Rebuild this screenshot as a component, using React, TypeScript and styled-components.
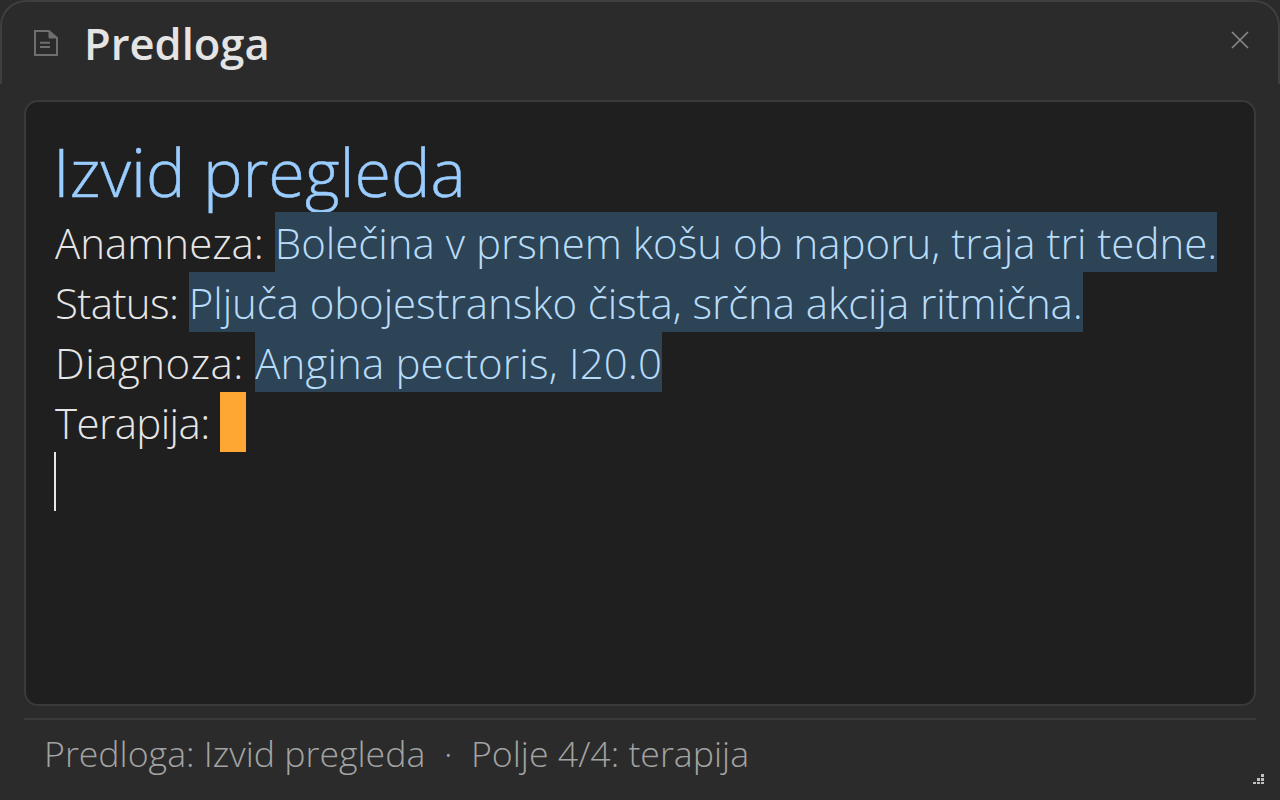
import React from "react";
import styled, { createGlobalStyle } from "styled-components";

const Global = createGlobalStyle`
  html, body { margin: 0; padding: 0; background: #2b2b2b; }
  * { box-sizing: border-box; }
`;

const Page = styled.div`
  width: 1280px;
  height: 800px;
  display: flex;
  flex-direction: column;
  background: #2b2b2b;
  overflow: hidden;
  position: relative;
  font-family: "Open Sans", "Noto Sans", sans-serif;
`;

const TitleBar = styled.header`
  height: 84px;
  flex: none;
  display: flex;
  align-items: flex-start;
  padding: 24px 28px 0 32px;
  border: 2px solid #3f3f3f;
  border-bottom: none;
  border-radius: 26px 26px 0 0;
`;

const DocIcon = styled.svg`
  width: 24px;
  height: 26px;
  margin-top: 4px;
  flex: none;
`;

const Title = styled.h1`
  margin: -7px 0 0 26px;
  flex: 1;
  font-size: 43.5px;
  line-height: 50px;
  font-weight: 600;
  color: #e4e4e4;
`;

const CloseIcon = styled.svg`
  width: 20px;
  height: 20px;
  margin-top: 4px;
  flex: none;
`;

const Editor = styled.main`
  flex: none;
  height: 606px;
  margin: 16px 24px 0;
  padding: 36px 29px 0;
  background: #1f1f1f;
  border: 2px solid #3a3a3a;
  border-radius: 14px;
`;

const Heading = styled.div`
  height: 74px;
  margin-left: -2px;
  font-size: 66.5px;
  line-height: 66px;
  font-weight: 300;
  color: #99ccff;
  -webkit-text-stroke: 0.5px #99ccff;
`;

const Line = styled.div`
  height: 60px;
  font-size: 42px;
  line-height: 62px;
  font-weight: 300;
  color: #e6e6e6;
  white-space: pre;
`;

const Label = styled.span<{ $tracking?: number }>`
  letter-spacing: ${(p) => p.$tracking ?? 0}px;
`;

const Filled = styled.span<{ $tracking?: number }>`
  display: inline-block;
  height: 60px;
  background: #2d4356;
  color: #b8dcf8;
  letter-spacing: ${(p) => p.$tracking ?? 0}px;
`;

const ActiveField = styled.span`
  display: inline-block;
  width: 26px;
  height: 60px;
  background: #ffa733;
  vertical-align: top;
`;

const Caret = styled.div`
  width: 2px;
  height: 59px;
  margin-left: -1px;
  background: #e6e6e6;
`;

const Divider = styled.hr`
  flex: none;
  height: 2px;
  margin: 12px 24px 0;
  border: none;
  background: #3a3a3a;
`;

const Footer = styled.footer`
  flex: 1;
  display: flex;
  align-items: center;
  padding: 0 0 14px 44px;
  font-size: 35.7px;
  font-weight: 300;
  color: #a3a3a3;
  white-space: pre;
`;

const Grip = styled.svg`
  position: absolute;
  right: 16px;
  bottom: 16px;
  width: 11px;
  height: 10px;
`;

export default function App() {
  return (
    <Page>
      <Global />
      <TitleBar>
        <DocIcon viewBox="0 0 24 26" fill="none" stroke="#6f6f6f" strokeWidth="2">
          <path d="M1 1h14l8 7v17H1z" />
          <path d="M15 1v7h8" fill="#6f6f6f" strokeWidth="1" />
          <path d="M6 12.7h10M6 17h10" />
        </DocIcon>
        <Title>Predloga</Title>
        <CloseIcon viewBox="0 0 20 20" fill="none" stroke="#8a8a8a" strokeWidth="1.6">
          <path d="M2 2l16 16M18 2L2 18" />
        </CloseIcon>
      </TitleBar>
      <Editor>
        <Heading>Izvid pregleda</Heading>
        <Line><Label>Anamneza: </Label><Filled>Bolečina v prsnem košu ob naporu, traja tri tedne.</Filled></Line>
        <Line><Label $tracking={-0.6}>Status: </Label><Filled $tracking={-0.08}>Pljuča obojestransko čista, srčna akcija ritmična.</Filled></Line>
        <Line><Label $tracking={0.5}>Diagnoza: </Label><Filled $tracking={0.14}>Angina pectoris, I20.0</Filled></Line>
        <Line><Label $tracking={-0.6}>Terapija: </Label><ActiveField /></Line>
        <Caret />
      </Editor>
      <Divider />
      <Footer>Predloga: Izvid pregleda  ·  Polje 4/4: terapija</Footer>
      <Grip viewBox="0 0 11 10" fill="#c0c0c0">
        <rect x="8" y="0" width="3" height="3" />
        <rect x="4" y="4" width="3" height="3" />
        <rect x="8" y="4" width="3" height="3" />
        <rect x="0" y="8" width="3" height="2" />
        <rect x="4" y="8" width="3" height="2" />
        <rect x="8" y="8" width="3" height="2" />
      </Grip>
    </Page>
  );
}
